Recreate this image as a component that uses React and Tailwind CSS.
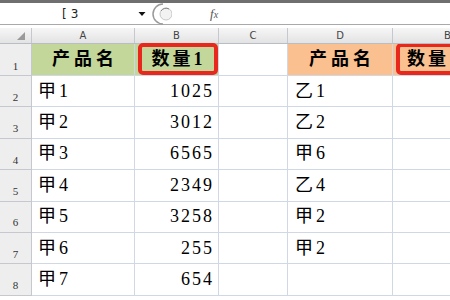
const cols = [
  { key: "A", w: 103 },
  { key: "B", w: 84 },
  { key: "C", w: 69 },
  { key: "D", w: 105 },
  { key: "B", w: 110 },
];

const rows = [
  { n: 2, a: "甲1", b: "1025", d: "乙1" },
  { n: 3, a: "甲2", b: "3012", d: "乙2" },
  { n: 4, a: "甲3", b: "6565", d: "甲6" },
  { n: 5, a: "甲4", b: "2349", d: "乙4" },
  { n: 6, a: "甲5", b: "3258", d: "甲2" },
  { n: 7, a: "甲6", b: "255", d: "甲2" },
  { n: 8, a: "甲7", b: "654", d: "" },
];

const cjk = { fontFamily: '"Liberation Serif", "Noto Sans CJK SC", serif' };

function RowHead({ n, tall }) {
  return (
    <div
      className={`w-[32px] shrink-0 flex items-end justify-center pb-[1px] bg-[#eeeeee] border-r border-b border-[#c5c9cf] text-[11px] text-[#333] ${tall ? "h-[32px]" : "h-[31.4px]"}`}
      style={{ fontFamily: '"Liberation Serif", serif' }}
    >
      {n}
    </div>
  );
}

function FormulaBar() {
  return (
    <div className="h-[28px] bg-white">
      <div className="h-[3px] bg-[#6f6f6f]" />
      <div className="h-[22px] flex items-center border-b border-[#a9a9a9] bg-white">
        <div className="w-[138px] h-full flex items-center pl-[62px] text-[12px] text-[#222] tracking-[4px]" style={{ fontFamily: '"DejaVu Sans", sans-serif' }}>
          [3
        </div>
        <svg width="8" height="6" viewBox="0 0 8 6" className="mr-[6px]">
          <path d="M0.5 1 L7.5 1 L4 5 Z" fill="#111" />
        </svg>
        <svg width="20" height="22" viewBox="0 0 20 22">
          <path d="M11 1 A10 10 0 0 0 11 21" fill="none" stroke="#9a9a9a" strokeWidth="1.5" />
          <circle cx="14" cy="11" r="6" fill="#f2f2f2" stroke="#c8c8c8" />
          <path d="M9 8 A6 6 0 0 1 17 6" fill="none" stroke="#888" strokeWidth="1" />
        </svg>
        <div className="ml-auto mr-[6px] w-[222px] flex items-center">
          <span className="text-[13px] italic text-[#555] ml-[-12px]" style={{ fontFamily: '"Liberation Serif", serif' }}>
            f<span className="text-[10px]">x</span>
          </span>
        </div>
      </div>
    </div>
  );
}

function HeaderRow() {
  return (
    <div className="flex h-[16px] bg-gradient-to-b from-[#f6f6f6] to-[#e3e3e3] border-b border-[#b9bec6]">
      <div className="w-[32px] shrink-0 border-r border-[#c5c9cf] relative">
        <svg width="8" height="8" viewBox="0 0 8 8" className="absolute right-[6px] bottom-[3px]">
          <path d="M8 0 L8 8 L0 8 Z" fill="#9a9a9a" />
        </svg>
      </div>
      {cols.map((c, i) => (
        <div
          key={i}
          className="shrink-0 border-r border-[#c5c9cf] flex items-center justify-center text-[10px] text-[#444]"
          style={{ width: c.w, fontFamily: '"DejaVu Sans", sans-serif' }}
        >
          {c.key}
        </div>
      ))}
    </div>
  );
}

export default function App() {
  return (
    <div className="w-[450px] h-[300px] overflow-hidden bg-white" style={cjk}>
      <FormulaBar />
      <HeaderRow />
      <div className="flex">
        <RowHead n={1} tall />
        <div className="w-[103px] h-[32px] shrink-0 bg-[#c4d79b] border-r border-b border-[#d0d7e5] flex items-center justify-center text-[18px] font-bold tracking-[4px] pl-[4px] text-black">
          产品名
        </div>
        <div className="w-[84px] h-[32px] shrink-0 bg-[#c4d79b] border-r border-b border-[#d0d7e5] relative flex items-center justify-center text-[18px] font-bold tracking-[3px] pl-[4px] text-black">
          <div className="absolute left-[3px] right-0 top-[-1px] bottom-[0px] border-[4px] border-[#e8281c] rounded-[5px]" />
          数量1
        </div>
        <div className="w-[69px] h-[32px] shrink-0 border-r border-b border-[#d0d7e5]" />
        <div className="w-[105px] h-[32px] shrink-0 bg-[#fac090] border-r border-b border-[#d0d7e5] flex items-center justify-center text-[18px] font-bold tracking-[4px] pl-[4px] text-black">
          产品名
        </div>
        <div className="w-[110px] h-[32px] shrink-0 bg-[#fac090] border-b border-[#d0d7e5] relative flex items-center pl-[14px] text-[18px] font-bold tracking-[3px] text-black overflow-hidden whitespace-nowrap">
          <div className="absolute left-[3px] right-[-10px] top-[-1px] bottom-[0px] border-[4px] border-[#e8281c] rounded-[5px]" />
          数量1
        </div>
      </div>
      {rows.map((r) => (
        <div key={r.n} className="flex">
          <RowHead n={r.n} />
          <div className="w-[103px] h-[31.4px] shrink-0 border-r border-b border-[#d0d7e5] flex items-center pl-[6px] text-[18px] tracking-[3px] text-black">
            {r.a}
          </div>
          <div className="w-[84px] h-[31.4px] shrink-0 border-r border-b border-[#d0d7e5] flex items-center justify-end pr-[4px] text-[18px] tracking-[2px] text-black">
            {r.b}
          </div>
          <div className="w-[69px] h-[31.4px] shrink-0 border-r border-b border-[#d0d7e5]" />
          <div className="w-[105px] h-[31.4px] shrink-0 border-r border-b border-[#d0d7e5] flex items-center pl-[7px] text-[18px] tracking-[3px] text-black">
            {r.d}
          </div>
          <div className="w-[110px] h-[31.4px] shrink-0 border-b border-[#d0d7e5]" />
        </div>
      ))}
    </div>
  );
}
